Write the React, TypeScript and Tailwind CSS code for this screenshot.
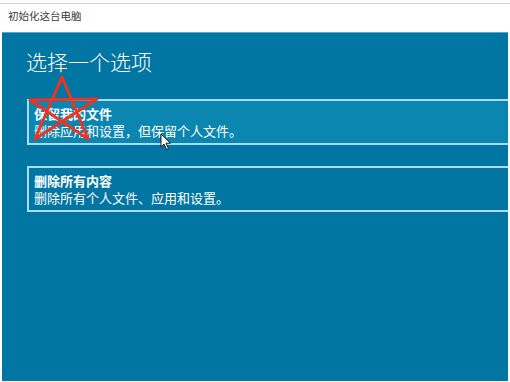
import React from "react";

const options = [
  {
    title: "保留我的文件",
    desc: "删除应用和设置，但保留个人文件。",
    active: true,
  },
  {
    title: "删除所有内容",
    desc: "删除所有个人文件、应用和设置。",
    active: false,
  },
];

function Star() {
  // hand-drawn red star over the first option
  return (
    <svg
      className="absolute left-0 top-0 pointer-events-none"
      width="120"
      height="150"
      viewBox="0 0 120 150"
    >
      <path
        d="M35 139 L62 77 L88 139 L30 100 L97 99 Z"
        fill="none"
        stroke="#ee3322"
        strokeWidth="3"
        strokeLinejoin="round"
      />
    </svg>
  );
}

function Cursor() {
  return (
    <svg
      className="absolute left-[160px] top-[133px] pointer-events-none"
      width="12"
      height="18"
      viewBox="0 0 12 18"
    >
      <path
        d="M1 1 L1 14 L4 11 L6.5 16.5 L8.5 15.5 L6 10.2 L10.5 10.2 Z"
        fill="#ffffff"
        stroke="#1a1a1a"
        strokeWidth="1"
        strokeLinejoin="round"
      />
    </svg>
  );
}

export default function App() {
  return (
    <div
      className="relative w-[510px] h-[382px] bg-white flex flex-col overflow-hidden"
      style={{ fontFamily: '"Noto Sans CJK SC", "Noto Sans", sans-serif' }}
    >
      {/* window title bar */}
      <div className="h-[29px] shrink-0 border-t border-[#cfcfcf] mt-[3px] flex items-center px-[8px]">
        <span className="text-[10.5px] text-[#3a3a3a] leading-none -mt-[4px]">初始化这台电脑</span>
      </div>

      {/* blue panel */}
      <div className="flex-1 ml-[2px] mr-[2px] mb-[1px] bg-[#0176a2] border-t border-[#56a9c8] overflow-hidden">
        <h1 className="text-white text-[21px] font-light leading-none pl-[24px] pt-[18px]">
          选择一个选项
        </h1>

        <div className="mt-[27px] flex flex-col gap-[21px] pl-[25px] -mr-[10px]">
          {options.map((o) => (
            <div
              key={o.title}
              className={`h-[46px] border-2 border-[#a9dcef] pl-[5px] pt-[4px] text-white text-[13px] leading-[17px] ${
                o.active ? "bg-[#0b86b1]" : "bg-[#0176a2]"
              }`}
            >
              <div className="font-bold">{o.title}</div>
              <div className="font-normal">{o.desc}</div>
            </div>
          ))}
        </div>
      </div>

      <Star />
      <Cursor />
    </div>
  );
}
